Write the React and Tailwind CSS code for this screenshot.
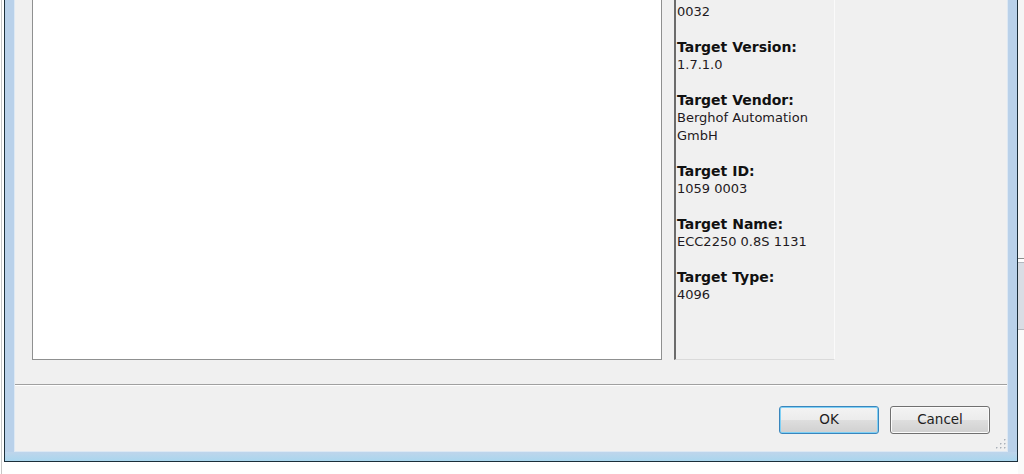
const info = [
  { label: "Device Address:", lines: ["0032"] },
  { label: "Target Version:", lines: ["1.7.1.0"] },
  { label: "Target Vendor:", lines: ["Berghof Automation GmbH"] },
  { label: "Target ID:", lines: ["1059 0003"] },
  { label: "Target Name:", lines: ["ECC2250 0.8S 1131"] },
  { label: "Target Type:", lines: ["4096"] },
];

const SizeGrip = () => (
  <svg width="10" height="10" viewBox="0 0 10 10" className="absolute bottom-[2px] right-[1px]">
    {[
      [8, 0],
      [4, 4],
      [8, 4],
      [0, 8],
      [4, 8],
      [8, 8],
    ].map(([x, y]) => (
      <g key={`${x}-${y}`}>
        <rect x={x + 1} y={y + 1} width="1" height="1" fill="#ffffff" />
        <rect x={x} y={y} width="1.5" height="1.5" fill="#a9b0b8" />
      </g>
    ))}
  </svg>
);

const Button = ({ children, primary }) => (
  <button
    className={`w-[100px] h-[28px] rounded-[3px] border text-[13.5px] leading-none text-[#1e1e1e] bg-[linear-gradient(#f3f3f3_0%,#ececec_49%,#dedede_50%,#d0d0d0_100%)] ${
      primary
        ? "border-[#3a86bd] shadow-[inset_0_0_0_1px_#7fd0f5]"
        : "border-[#707070] shadow-[inset_0_0_0_1px_#fbfbfb]"
    }`}
  >
    {children}
  </button>
);

export default function App() {
  return (
    <div className="flex h-[474px] w-[1024px] overflow-hidden bg-white font-['DejaVu_Sans',sans-serif]">
      <div className="w-px" />
      <div className="w-px bg-[#c6c6c6]" />
      <div className="w-[2px]" />

      {/* dialog window, title bar is above the visible area */}
      <div className="flex flex-col self-start -mt-[40px] w-[1014px] border-x border-b border-[#1b2e3a] bg-[#b9d1ea]">
        <div className="mx-[9px] relative flex flex-col border-x border-b border-[#dde8f3] bg-[#f0f0f0] pb-[17px]">
          <div className="flex h-[400px] pl-[17px]">
            <div className="w-[630px] border border-t-0 border-[#8f9090] bg-white" />
            <div className="ml-[12px] w-[161px] border-l-2 border-l-[#6b6b6b] border-r border-r-[#fafafa] border-b border-b-[#dadada] pl-[1px] pt-[25px] text-[13px] leading-[18px]">
              {info.map((item, i) => (
                <div key={item.label} className={i ? "mt-[17px]" : ""}>
                  <div className="font-bold text-[14px] text-[#111]">{item.label}</div>
                  <div className="text-[#1f1a22]">{item.lines[0]}</div>
                </div>
              ))}
            </div>
          </div>

          <div className="mt-[24px] border-t border-b border-t-[#a0a0a0] border-b-white" />

          <div className="mt-[20px] flex justify-end gap-[11px] pr-[17px]">
            <Button primary>OK</Button>
            <Button>Cancel</Button>
          </div>

          <SizeGrip />
        </div>
        <div className="h-[9px] bg-[linear-gradient(#bfd5eb,#a9d6ee)]" />
      </div>

      <div className="flex w-[6px] flex-col">
        <div className="h-[258px] bg-[#f5f5f5]" />
        <div className="h-px bg-[#8e8e8e]" />
        <div className="h-[3px] bg-white" />
        <div className="h-[68px] border-y border-[#b4b8be] bg-[#d9dde4]" />
        <div className="flex-1 bg-[#fafafa]" />
      </div>
    </div>
  );
}
